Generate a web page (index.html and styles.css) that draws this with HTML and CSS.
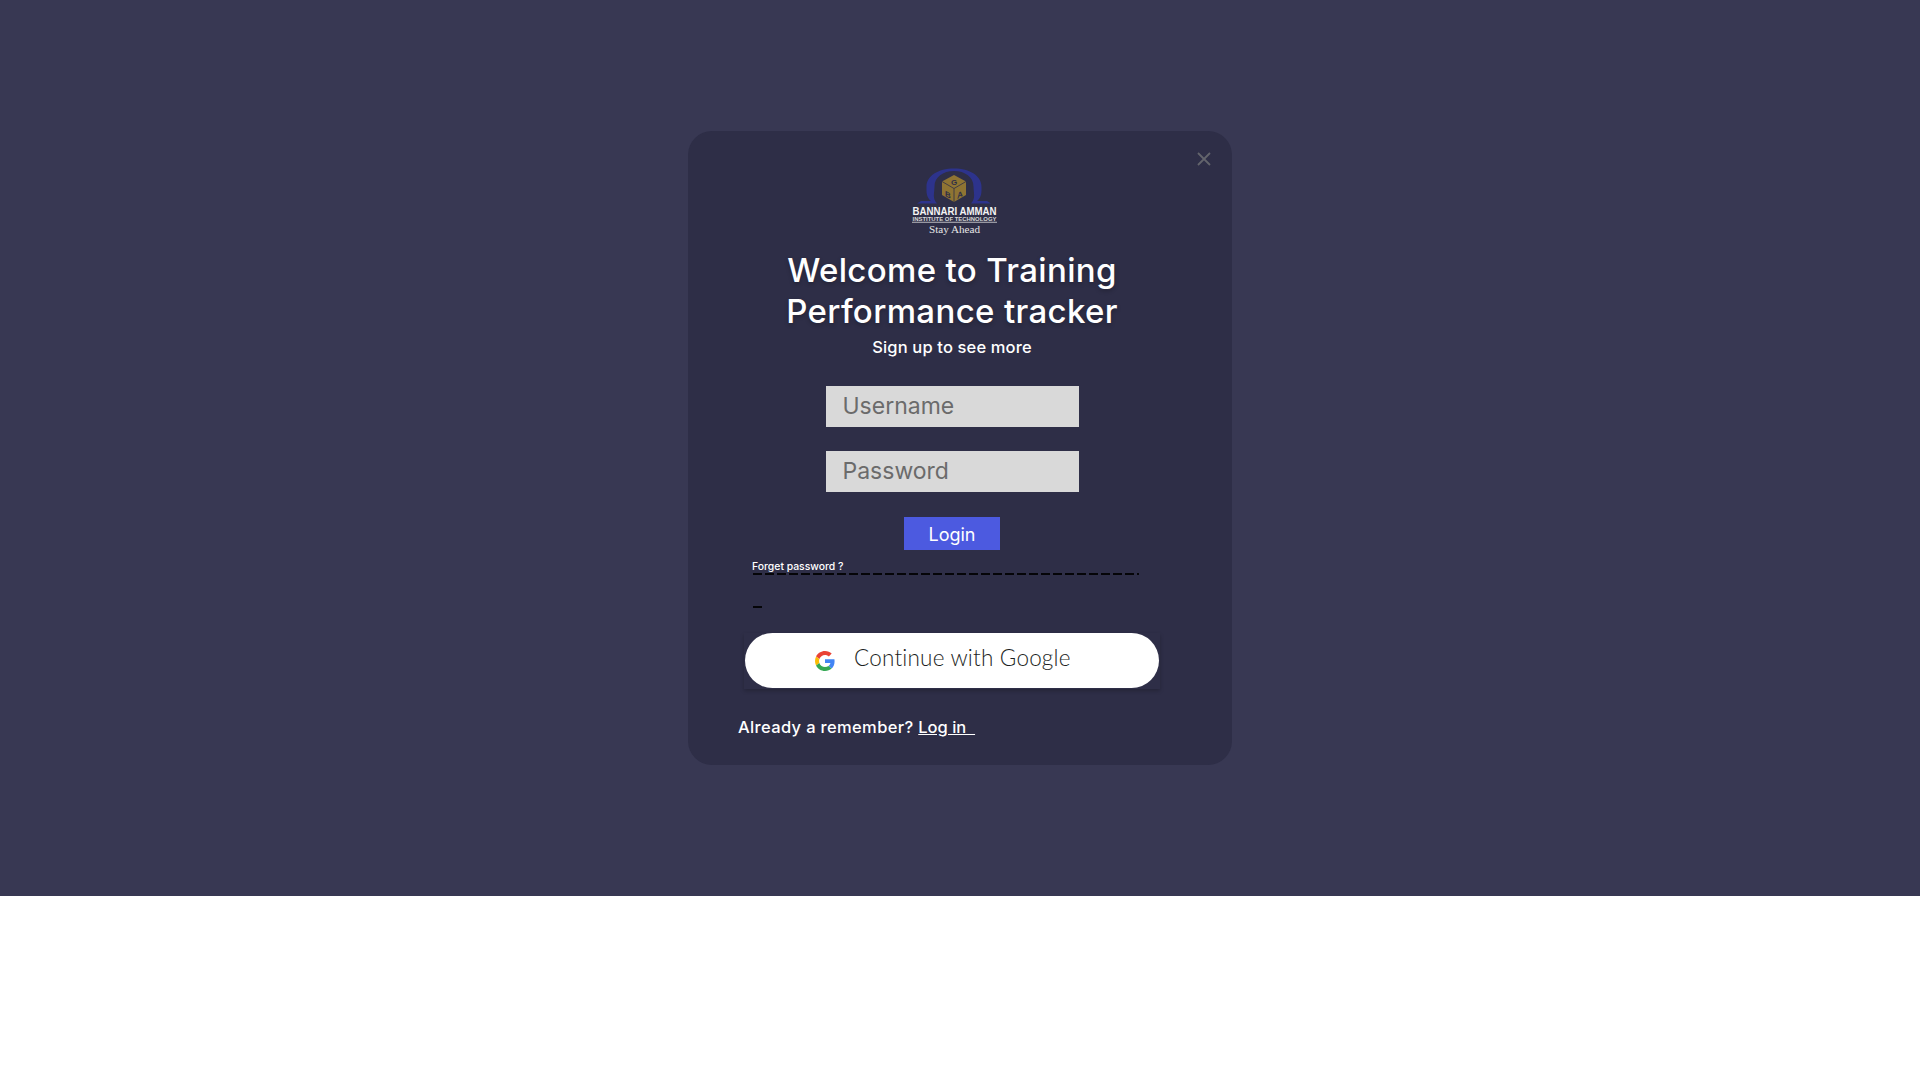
FILE: index.html
```html
<!DOCTYPE html>
<html lang="en">
<head>
<meta charset="utf-8">
<title>Training Performance tracker</title>
<link rel="stylesheet" href="styles.css">
</head>
<body>
<main class="stage">
  <section class="modal">
    <button class="close" aria-label="Close">
      <svg width="14" height="14" viewBox="0 0 14 14"><path d="M1 1 13 13M13 1 1 13" stroke="#63646c" stroke-width="1.8" fill="none"/></svg>
    </button>
    <svg class="logo" width="88" height="68" viewBox="0 0 88 68">
      <path d="M6 35.500 10 33H20C15 29 15.500 24 15.500 18.500 15.500 8 27 .5 43 .5S70.500 8 70.500 18.500C70.500 24 71 29 66 33H76L80 35.500H60C65 30 62.500 25 62.500 18.500 62.500 9 54 3 43 3S23.500 9 23.500 18.500C23.500 25 21 30 26 35.500Z" fill="#2d338c"/>
      <path d="M43 7 55 13.500V27L43 34 31 27V13.500Z" fill="#8f7433"/>
      <path d="M43 20.500V34M43 20.500 31 13.500M43 20.500 55 13.500" stroke="#2e2e47" stroke-width=".8" fill="none"/>
      <text class="logo-g" transform="translate(43 16.500) scale(1 .8)" text-anchor="middle">G</text>
      <text class="logo-g" transform="translate(37 29.500) skewY(28)" text-anchor="middle">B</text>
      <text class="logo-g" transform="translate(49 29.500) skewY(-28)" text-anchor="middle">A</text>
      <text class="logo-name" x="1.500" y="46.500" textLength="84" lengthAdjust="spacingAndGlyphs">BANNARI AMMAN</text>
      <text class="logo-inst" x="1.500" y="52.800" textLength="84" lengthAdjust="spacingAndGlyphs">INSTITUTE OF TECHNOLOGY</text>
      <rect x="1" y="53.800" width="85" height=".8" fill="#dcdcdc"/>
      <text class="logo-tag" x="18" y="64.500" textLength="51" lengthAdjust="spacingAndGlyphs">Stay Ahead</text>
    </svg>
    <h1 class="title">Welcome to Training<br>Performance tracker</h1>
    <p class="subtitle">Sign up to see more</p>
    <input class="field" type="text" placeholder="Username">
    <input class="field field-second" type="password" placeholder="Password">
    <button class="login">Login</button>
    <div class="forget">
      <a class="forget-link" href="#">Forget password ?</a>
      <div class="dash-line"></div>
      <div class="dash-stub"></div>
    </div>
    <div class="google-wrap">
      <button class="google">
        <svg class="g-icon" width="20" height="20" viewBox="0 0 48 48">
          <path fill="#EA4335" d="M24 9.500c3.540 0 6.710 1.220 9.210 3.600l6.850-6.850C35.900 2.380 30.470 0 24 0 14.620 0 6.510 5.380 2.560 13.220l7.980 6.190C12.430 13.720 17.740 9.500 24 9.500z"/>
          <path fill="#4285F4" d="M46.980 24.550c0-1.570-.150-3.090-.380-4.550H24v9.020h12.940c-.580 2.960-2.260 5.480-4.780 7.180l7.730 6c4.510-4.180 7.090-10.360 7.090-17.650z"/>
          <path fill="#FBBC05" d="M10.530 28.590c-.480-1.450-.760-2.990-.760-4.590s.270-3.140.760-4.590l-7.980-6.190C.920 16.460 0 20.120 0 24c0 3.880.920 7.540 2.560 10.780l7.970-6.190z"/>
          <path fill="#34A853" d="M24 48c6.480 0 11.930-2.130 15.890-5.810l-7.730-6c-2.150 1.450-4.920 2.300-8.160 2.300-6.260 0-11.570-4.220-13.470-9.910l-7.980 6.190C6.510 42.620 14.620 48 24 48z"/>
        </svg>
        <span class="g-text">Continue with Google</span>
      </button>
    </div>
    <p class="remember">Already a remember? <a class="remember-link" href="#">Log in&nbsp;&nbsp;</a></p>
  </section>
</main>
</body>
</html>
```
FILE: styles.css
```css
* { box-sizing: border-box; }
html, body { margin: 0; padding: 0; background: #fff; }
body { font-family: Inter, "Noto Sans", sans-serif; }

.stage {
  height: 896px;
  background: #383853;
  display: flex;
  justify-content: center;
  padding-top: 131px;
}

.modal {
  position: relative;
  width: 544px;
  height: 634px;
  background: #2e2e47;
  border-radius: 24px;
  display: flex;
  flex-direction: column;
  align-items: center;
  padding: 37px 16px 0 0;
}

.close {
  position: absolute;
  top: 21px;
  right: 21px;
  width: 14px;
  height: 14px;
  padding: 0;
  border: 0;
  background: none;
  display: block;
}
.close svg { display: block; }

.logo { display: block; margin-left: 5px; overflow: visible; }
.logo-g { font: 700 8px "Liberation Sans", sans-serif; fill: #2e2e47; }
.logo-name { font: 700 10.500px "Liberation Sans", sans-serif; fill: #f4f4f4; }
.logo-inst { font: 700 5.500px "Liberation Sans", sans-serif; fill: #d8d8d8; }
.logo-tag { font: 400 10.500px "Liberation Serif", serif; fill: #e6e6e6; }

.title {
  margin: 14px 0 0;
  font-size: 33px;
  line-height: 41px;
  font-weight: 550;
  letter-spacing: .35px;
  color: #fff;
  text-align: center;
  text-shadow: 0 2px 4px rgba(0,0,0,.25);
}

.subtitle {
  margin: 3px 0 0;
  font-size: 16.500px;
  line-height: 24px;
  font-weight: 450;
  letter-spacing: .15px;
  color: #fff;
}

.field {
  width: 253px;
  height: 41px;
  margin-top: 27px;
  padding: 0 0 2px 17px;
  border: 0;
  border-radius: 0;
  background: #d9d9d9;
  font: 400 23px Inter, "Noto Sans", sans-serif;
  color: #333;
  outline: 0;
}
.field::placeholder { color: #6b6b6b; opacity: 1; }
.field-second { margin-top: 24px; }

.login {
  width: 96px;
  height: 33px;
  margin-top: 25px;
  padding: 2px 0 0;
  border: 0;
  background: #4c5ae0;
  color: #fff;
  font: 400 18px Inter, "Noto Sans", sans-serif;
}

.forget {
  align-self: flex-start;
  width: 388px;
  height: 76px;
  margin: 9px 0 0 64px;
  display: flex;
  flex-direction: column;
  align-items: flex-start;
}
.forget-link {
  font-size: 10.400px;
  line-height: 15px;
  font-weight: 500;
  color: #fff;
  text-decoration: none;
  position: relative;
  z-index: 1;
}
.dash-line {
  width: 386px;
  height: 2px;
  margin: -1px 0 0 1px;
  background: repeating-linear-gradient(90deg, #050508 0 9px, transparent 9px 12px);
}
.dash-stub {
  width: 9px;
  height: 2px;
  margin: 31px 0 0 1px;
  background: #050508;
}

.google-wrap {
  width: 416px;
  height: 56px;
  margin-top: -2px;
  box-shadow: 0 2px 4px rgba(0,0,0,.22);
  display: flex;
}
.google {
  flex: 1;
  margin: 0 1px 1px;
  padding: 0 0 0 70px;
  border: 0;
  background: #fff;
  border-radius: 28px;
  display: flex;
  align-items: center;
  justify-content: flex-start;
}
.g-icon { display: block; margin-top: 1px; flex: none; }
.g-text {
  margin: -6px 0 0 19px;
  font: 300 22.500px Lato, "Noto Sans", sans-serif;
  letter-spacing: .2px;
  color: #1d1f24;
}

.remember {
  align-self: flex-start;
  margin: 26px 0 0 50px;
  font-size: 16.500px;
  line-height: 24px;
  font-weight: 450;
  letter-spacing: .35px;
  color: #fff;
}
.remember-link { color: #fff; letter-spacing: 0; }
```
